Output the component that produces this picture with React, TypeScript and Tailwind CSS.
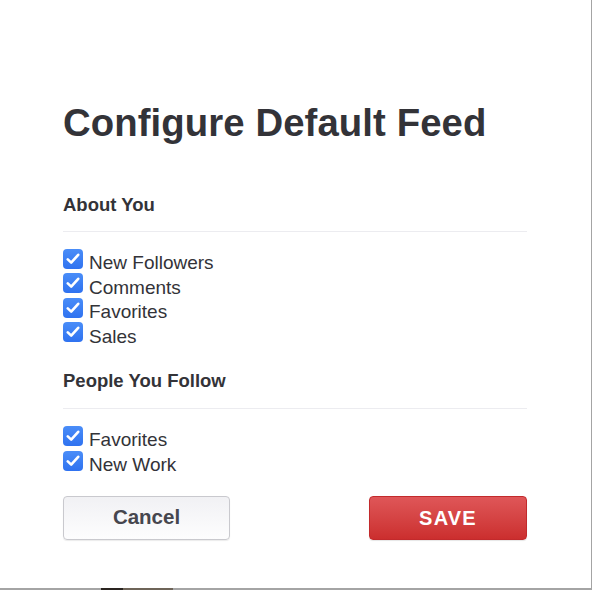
import React from "react";

function Check() {
  return (
    <span className="mt-[-2.4px] flex h-[20px] w-[20px] shrink-0 items-center justify-center rounded-[4px] bg-gradient-to-b from-[#4a8df8] to-[#2f72f0]">
      <svg width="14" height="12" viewBox="0 0 14 12" fill="none">
        <path d="M1.8 6.4 L5.2 9.6 L12.2 1.8" stroke="white" strokeWidth="2.6" strokeLinecap="round" strokeLinejoin="round" />
      </svg>
    </span>
  );
}

function Row({ label }: { label: string }) {
  return (
    <div className="flex h-[24.6px] items-start gap-[6px]">
      <Check />
      <span className="text-[19px] leading-[24px] text-[#333338]">{label}</span>
    </div>
  );
}

export default function App() {
  return (
    <div
      className="relative h-[590px] w-[592px] overflow-hidden bg-[#a4a4a4]"
      style={{ fontFamily: '"Liberation Sans", Arial, Helvetica, sans-serif' }}
    >
      <div className="h-[588px] w-[591px] bg-white px-[63px] pt-[101px]">
        <h1 className="text-[38.3px] font-bold leading-[44px] text-[#333338] tracking-[0.1px]">
          Configure Default Feed
        </h1>

        <h2 className="mt-[48px] w-[464px] border-b border-[#ececf0] pb-[14px] text-[18.5px] font-bold leading-[24px] text-[#333338]">
          About You
        </h2>
        <div className="mt-[19px]">
          <Row label="New Followers" />
          <Row label="Comments" />
          <Row label="Favorites" />
          <Row label="Sales" />
        </div>

        <h2 className="mt-[20px] w-[464px] border-b border-[#ececf0] pb-[15px] text-[18.5px] font-bold leading-[24px] text-[#333338]">
          People You Follow
        </h2>
        <div className="mt-[19px]">
          <Row label="Favorites" />
          <Row label="New Work" />
        </div>

        <div className="mt-[18px] flex w-[464px] justify-between">
          <button className="h-[44px] w-[167px] rounded-[4px] border border-[#c9c9ce] bg-gradient-to-b from-[#f1f1f4] to-[#fdfdfe] text-[20.5px] font-bold text-[#46464e] shadow-[0_1px_1px_rgba(0,0,0,0.08)]">
            Cancel
          </button>
          <button className="h-[44px] w-[158px] rounded-[4px] border border-[#c22a2c] bg-gradient-to-b from-[#df5658] to-[#cb2e2e] text-[20px] font-bold tracking-[1.2px] text-white shadow-[0_1px_1px_rgba(0,0,0,0.1)]">
            SAVE
          </button>
        </div>
      </div>
      <div className="absolute bottom-0 left-[101px] h-[2px] w-[22px] bg-[#2a2420]" />
      <div className="absolute bottom-0 left-[123px] h-[2px] w-[50px] bg-[#6e6458]" />
    </div>
  );
}
